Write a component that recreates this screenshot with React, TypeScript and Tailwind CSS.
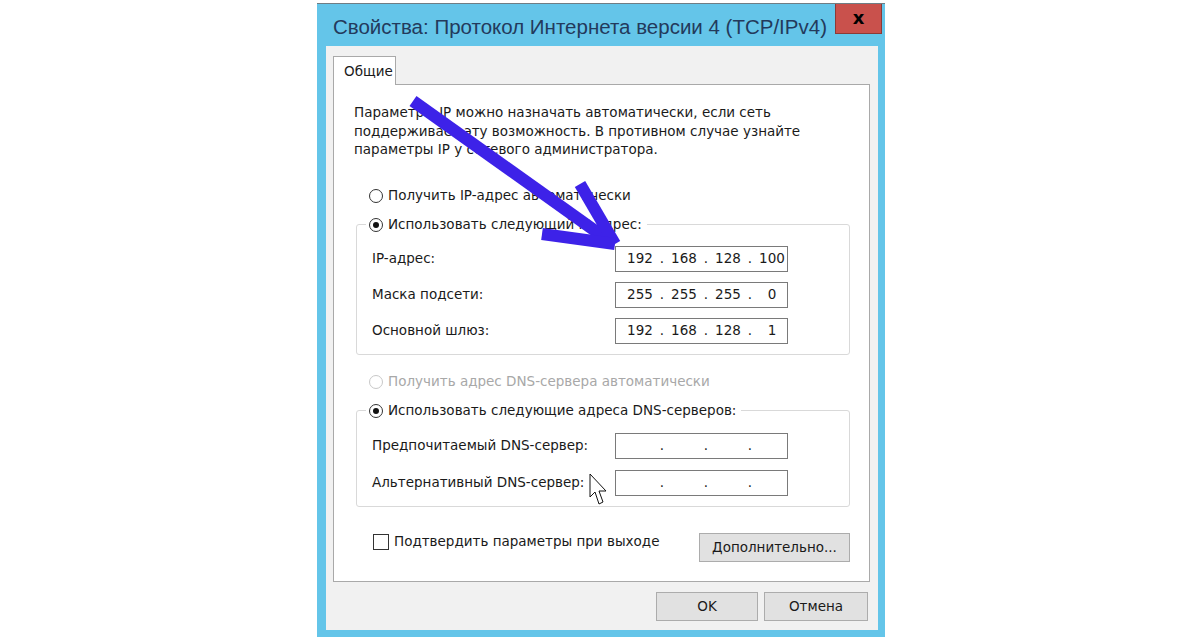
import type { ReactNode } from "react";

const ui = { fontFamily: '"DejaVu Sans", "Liberation Sans", sans-serif' };

function Radio({ checked, disabled }: { checked?: boolean; disabled?: boolean }) {
  return (
    <span
      className={`flex h-[14px] w-[14px] shrink-0 items-center justify-center rounded-full border bg-white ${
        disabled ? "border-[#c8c8c8]" : "border-[#333]"
      }`}
    >
      {checked && <span className="h-[6px] w-[6px] rounded-full bg-[#111]" />}
    </span>
  );
}

function RadioLabel({ text, checked, disabled }: { text: string; checked?: boolean; disabled?: boolean }) {
  return (
    <span className="flex h-[20px] items-center gap-[5px]">
      <Radio checked={checked} disabled={disabled} />
      <span className={disabled ? "text-[#a8a8a8]" : "text-[#1a1a1a]"}>{text}</span>
    </span>
  );
}

function IpBox({ parts }: { parts: string[] }) {
  return (
    <div className="flex h-[26px] w-[173px] items-center border border-[#7a7a7a] bg-white pl-[7px] text-[#1a1a1a]">
      {parts.map((p, i) => (
        <span key={i} className="flex items-center">
          {i > 0 && <span className="w-[10px] text-center">.</span>}
          <span className="w-[34px] text-center">{p}</span>
        </span>
      ))}
    </div>
  );
}

function Row({ label, children }: { label: string; children: ReactNode }) {
  return (
    <div className="flex items-center">
      <span className="w-[243px] text-[#1a1a1a]">{label}</span>
      {children}
    </div>
  );
}

function GroupBox({ legend, children, className }: { legend: ReactNode; children: ReactNode; className?: string }) {
  return (
    <fieldset className={`ml-[2px] rounded-[3px] border border-[#d9d9d9] pl-[15px] pb-[10px] ${className ?? ""}`}>
      <legend className="-ml-[6px] pl-[3px] pr-[5px]">{legend}</legend>
      {children}
    </fieldset>
  );
}

function Button({ children, className }: { children: ReactNode; className?: string }) {
  return (
    <button
      type="button"
      className={`flex h-[29px] items-center justify-center border border-[#acacac] bg-[#e1e1e1] text-[#1a1a1a] ${className ?? ""}`}
    >
      {children}
    </button>
  );
}

export default function App() {
  return (
    <div className="relative h-[637px] w-[1200px] overflow-hidden bg-white text-[13.5px]" style={ui}>
      <div className="ml-[317px] mt-[3px] flex h-[640px] w-[568px] flex-col border-t border-[#6f7d84] bg-[#64c5e9] pl-[9px] pr-[7px]">
        {/* title bar */}
        <div className="flex h-[42px] items-start justify-between">
          <span
            className="pl-[7px] pt-[10px] text-[20.5px] leading-[26px] text-[#233a5c]"
            style={{ fontFamily: '"Liberation Sans", sans-serif' }}
          >
            Свойства: Протокол Интернета версии 4 (TCP/IPv4)
          </span>
          <span className="-mr-[4px] flex h-[30px] w-[47px] items-center justify-center border border-t-0 border-[#8c3a36] bg-[#c9514c] pb-[2px] text-[18px] font-bold text-black">
            x
          </span>
        </div>

        {/* client */}
        <div className="flex flex-col bg-[#f1f1f1] pl-[7px] pr-[8px] pt-[10px] pb-[9px]">
          <div className="flex">
            <div className="relative z-10 -mb-px flex h-[29px] w-[63px] items-center border border-b-0 border-[#a9a9a9] bg-white pl-[10px] text-[#1a1a1a]">
              Общие
            </div>
          </div>

          <div className="flex h-[498px] w-[537px] flex-col border border-[#a9a9a9] bg-white pl-[20px] pr-[19px] pt-[18px]">
            <p className="leading-[18.5px] text-[#1a1a1a]">
              Параметры IP можно назначать автоматически, если сеть
              <br />
              поддерживает эту возможность. В противном случае узнайте
              <br />
              параметры IP у сетевого администратора.
            </p>

            <div className="ml-[15px] mt-[27px]">
              <RadioLabel text="Получить IP-адрес автоматически" />
            </div>

            <GroupBox className="mt-[9px]" legend={<RadioLabel text="Использовать следующий IP-адрес:" checked />}>
              <div className="flex flex-col gap-[10px] pt-[11px]">
                <Row label="IP-адрес:">
                  <IpBox parts={["192", "168", "128", "100"]} />
                </Row>
                <Row label="Маска подсети:">
                  <IpBox parts={["255", "255", "255", "0"]} />
                </Row>
                <Row label="Основной шлюз:">
                  <IpBox parts={["192", "168", "128", "1"]} />
                </Row>
              </div>
            </GroupBox>

            <div className="ml-[15px] mt-[17px]">
              <RadioLabel text="Получить адрес DNS-сервера автоматически" disabled />
            </div>

            <GroupBox className="mt-[9px]" legend={<RadioLabel text="Использовать следующие адреса DNS-серверов:" checked />}>
              <div className="flex flex-col gap-[11px] pt-[12px]">
                <Row label="Предпочитаемый DNS-сервер:">
                  <IpBox parts={["", "", "", ""]} />
                </Row>
                <Row label="Альтернативный DNS-сервер:">
                  <IpBox parts={["", "", "", ""]} />
                </Row>
              </div>
            </GroupBox>

            <div className="mt-[26px] flex items-start justify-between">
              <span className="ml-[19px] flex h-[18px] items-center gap-[5px] text-[#1a1a1a]">
                <span className="h-[16px] w-[16px] border border-[#333] bg-white" />
                Подтвердить параметры при выходе
              </span>
              <Button className="w-[151px]">Дополнительно...</Button>
            </div>
          </div>

          <div className="mt-[10px] flex justify-end gap-[6px] pr-[2px]">
            <Button className="w-[102px]">OK</Button>
            <Button className="w-[104px]">Отмена</Button>
          </div>
        </div>
      </div>

      {/* annotation arrow + mouse pointer drawn over the dialog */}
      <svg className="pointer-events-none absolute inset-0" width="1200" height="637" viewBox="0 0 1200 637">
        <g stroke="#3d22e8" strokeWidth="12" strokeLinecap="butt" fill="none">
          <line x1="413" y1="101" x2="608" y2="240" />
          <line x1="580" y1="184" x2="615" y2="244" />
          <line x1="542" y1="234" x2="615" y2="244" />
        </g>
        <path
          d="M590 474 L590 497 L595 492 L599 504 L603 502 L599 491 L606 491 Z"
          fill="#fff"
          stroke="#111"
          strokeWidth="1"
          strokeLinejoin="round"
        />
      </svg>
    </div>
  );
}
